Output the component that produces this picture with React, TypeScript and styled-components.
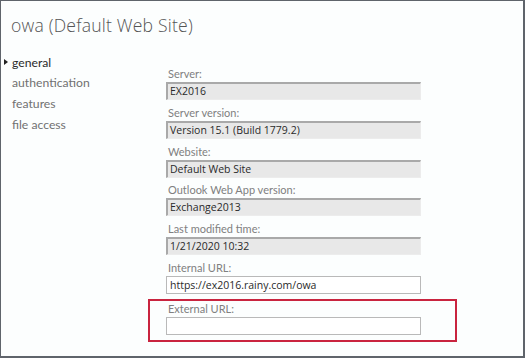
import React from "react";
import styled, { createGlobalStyle } from "styled-components";

const Global = createGlobalStyle`
  html, body { margin: 0; padding: 0; background: #ffffff; }
  body { font-family: "Open Sans", "Noto Sans", "Liberation Sans", sans-serif; }
`;

const Frame = styled.div`
  width: 525px;
  height: 358px;
  box-sizing: border-box;
  border: 1px solid #5f646b;
  border-bottom-width: 2px;
  border-right-width: 2px;
  background: #fcfefe;
  display: flex;
  flex-direction: column;
  overflow: hidden;
`;

const Title = styled.h1`
  margin: 0;
  padding: 13px 0 0 10px;
  font-size: 17.6px;
  line-height: 22px;
  font-weight: 300;
  color: #555555;
  letter-spacing: 0.2px;
`;

const Body = styled.div`
  display: flex;
  margin-top: 16px;
`;

const Nav = styled.ul`
  list-style: none;
  margin: 0;
  padding: 0 0 0 3px;
  width: 162px;
  flex: none;
`;

const NavItem = styled.li<{ $active?: boolean }>`
  display: flex;
  align-items: center;
  height: 20.6px;
  font-family: "Lato", "Open Sans", sans-serif;
  font-size: 12.2px;
  font-weight: 400;
  color: ${(p) => (p.$active ? "#2b2b2b" : "#717171")};
`;

const Marker = styled.span<{ $show?: boolean }>`
  width: 8px;
  flex: none;
  display: flex;
  align-items: center;
  &::before {
    content: "";
    display: ${(p) => (p.$show ? "block" : "none")};
    width: 0;
    height: 0;
    border-top: 3px solid transparent;
    border-bottom: 3px solid transparent;
    border-left: 4px solid #222;
  }
`;

const Form = styled.div`
  display: flex;
  flex-direction: column;
  gap: 4.8px;
  padding-top: 14px;
`;

const Field = styled.div<{ $highlight?: boolean }>`
  display: flex;
  flex-direction: column;
  ${(p) =>
    p.$highlight
      ? `
    margin-left: -18px;
    border: 2px solid #c9243f;
    padding: 0 34px 5px 16px;
    width: 255px;
  `
      : ""}
`;

const Label = styled.label`
  font-family: "Lato", "Open Sans", sans-serif;
  font-size: 11px;
  line-height: 16px;
  color: #808080;
  padding-left: 2px;
`;

const Input = styled.div<{ $readonly?: boolean }>`
  width: 255px;
  height: 18px;
  box-sizing: border-box;
  font-size: 10.5px;
  line-height: 15px;
  color: #2a2a2a;
  padding-left: 3px;
  white-space: nowrap;
  ${(p) =>
    p.$readonly
      ? `
    background: #e8e8e8;
    border-top: 2px solid #a9a9a9;
    border-left: 2px solid #a9a9a9;
    border-right: 1px solid #ececec;
    border-bottom: 1px solid #ececec;
    padding-left: 2px;
  `
      : `
    background: #ffffff;
    border: 1px solid #b9b9b9;
    line-height: 16px;
  `}
`;

const fields = [
  { label: "Server:", value: "EX2016", readonly: true },
  { label: "Server version:", value: "Version 15.1 (Build 1779.2)", readonly: true },
  { label: "Website:", value: "Default Web Site", readonly: true },
  { label: "Outlook Web App version:", value: "Exchange2013", readonly: true },
  { label: "Last modified time:", value: "1/21/2020 10:32", readonly: true },
  { label: "Internal URL:", value: "https://ex2016.rainy.com/owa", readonly: false },
  { label: "External URL:", value: "", readonly: false, highlight: true },
];

const navItems = ["general", "authentication", "features", "file access"];

export default function App() {
  return (
    <>
      <Global />
      <Frame>
        <Title>owa (Default Web Site)</Title>
        <Body>
          <Nav>
            {navItems.map((n, i) => (
              <NavItem key={n} $active={i === 0}>
                <Marker $show={i === 0} />
                {n}
              </NavItem>
            ))}
          </Nav>
          <Form>
            {fields.map((f) => (
              <Field key={f.label} $highlight={f.highlight}>
                <Label>{f.label}</Label>
                <Input $readonly={f.readonly}>{f.value}</Input>
              </Field>
            ))}
          </Form>
        </Body>
      </Frame>
    </>
  );
}
